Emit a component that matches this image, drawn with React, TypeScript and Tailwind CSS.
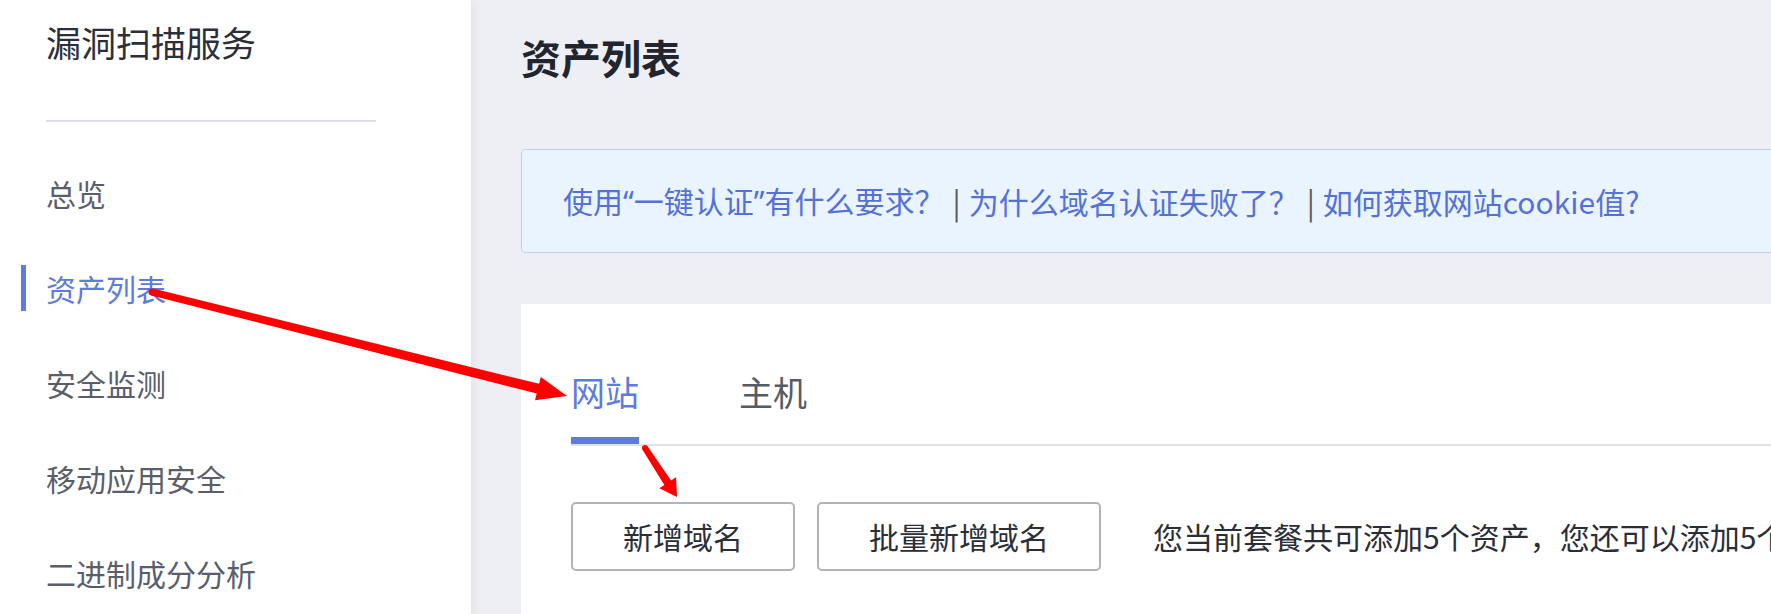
import React from 'react'

const NAV = [
  { label: '总览' },
  { label: '资产列表', active: true },
  { label: '安全监测' },
  { label: '移动应用安全' },
  { label: '二进制成分分析' },
]

type Pt = [number, number]

// annotation arrow: tapered shaft + triangular head
function arrowPoints(s: Pt, t: Pt, w0: number, w1: number, headLen: number, headHalf: number) {
  const dx = t[0] - s[0]
  const dy = t[1] - s[1]
  const len = Math.hypot(dx, dy)
  const ux = dx / len
  const uy = dy / len
  const nx = -uy
  const ny = ux
  const bx = t[0] - ux * headLen
  const by = t[1] - uy * headLen
  const pts: Pt[] = [
    [s[0] + nx * w0 / 2, s[1] + ny * w0 / 2],
    [bx + nx * w1 / 2, by + ny * w1 / 2],
    [bx + nx * headHalf, by + ny * headHalf],
    t,
    [bx - nx * headHalf, by - ny * headHalf],
    [bx - nx * w1 / 2, by - ny * w1 / 2],
    [s[0] - nx * w0 / 2, s[1] - ny * w0 / 2],
  ]
  return pts.map(p => p.join(',')).join(' ')
}

function Arrows() {
  return (
    <svg className="pointer-events-none absolute left-0 top-0 z-20" width={1771} height={614}>
      <circle cx={152} cy={292} r={3.5} fill="#ff0000" />
      <polygon points={arrowPoints([152, 292], [567, 396], 7, 10, 30, 12)} fill="#ff0000" />
      <circle cx={645} cy={448} r={3} fill="#ff0000" />
      <polygon points={arrowPoints([645, 448], [677, 497], 6, 8, 17, 10)} fill="#ff0000" />
    </svg>
  )
}

function Sidebar() {
  return (
    <aside className="relative z-10 w-[471px] shrink-0 bg-white shadow-[3px_0_8px_rgba(40,45,70,0.06)]">
      <div className="pl-[46px] pt-[18px]">
        <h1 className="text-[35px] leading-[48px] text-[#2c2f39]">漏洞扫描服务</h1>
        <div className="mt-[54px] h-[2px] w-[330px] bg-[#dedfe4]" />
      </div>

      <nav className="mt-[48px] flex flex-col gap-[49px]">
        {NAV.map(({ label, active }) => (
          <div key={label} className="ml-[21px] flex h-[46px] items-center">
            <span className={active ? 'h-full w-[5px] bg-[#5d7be0]' : 'h-full w-[5px]'} />
            <span
              className={
                active
                  ? 'ml-[20px] text-[30px] leading-[46px] text-[#5d7be0]'
                  : 'ml-[20px] text-[30px] leading-[46px] text-[#5a5e6a]'
              }
            >
              {label}
            </span>
          </div>
        ))}
      </nav>
    </aside>
  )
}

function Sep() {
  return <span className="px-[8px] text-[#5f5a55]">|</span>
}

// narrow (latin) curly quotes, as in the original rendering
function Q({ children }: { children: string }) {
  return <span className="font-['Noto_Sans',sans-serif]">{children}</span>
}

export default function App() {
  return (
    <div className="relative flex h-[614px] w-[1771px] overflow-hidden bg-[#eeeff4] font-['Noto_Sans_CJK_SC','Noto_Sans',sans-serif]">
      <Sidebar />

      <main className="min-w-0 flex-1 pl-[50px] pt-[29px]">
        <h2 className="text-[40px] font-bold leading-[56px] text-[#22252d]">资产列表</h2>

        <div className="mt-[64px] flex h-[104px] w-[1400px] items-center whitespace-nowrap rounded-[4px] border border-[#bfcff6] bg-[#eaf4ff] pl-[41px] text-[30px] text-[#5571d8]">
          <span>
            使用<Q>“</Q>一键认证<Q>”</Q>有什么要求？
          </span>
          <Sep />
          <span>为什么域名认证失败了？</span>
          <Sep />
          <span>如何获取网站cookie值?</span>
        </div>

        <section className="mt-[51px] h-[400px] w-[1400px] bg-white pl-[50px] pt-[64px]">
          <div className="flex gap-[100px] border-b-2 border-[#e1e2e7]">
            <div className="border-b-[7px] border-[#5d7be0] pb-[21px] text-[34px] leading-[48px] text-[#5d7be0]">
              网站
            </div>
            <div className="pb-[28px] text-[34px] leading-[48px] text-[#555a66]">主机</div>
          </div>

          <div className="mt-[56px] flex items-center whitespace-nowrap text-[30px] text-[#2b2e37]">
            <button className="h-[69px] rounded-[5px] border-2 border-[#b0b3bb] bg-white px-[50px]">
              新增域名
            </button>
            <button className="ml-[22px] h-[69px] rounded-[5px] border-2 border-[#b0b3bb] bg-white px-[50px]">
              批量新增域名
            </button>
            <span className="ml-[52px]">您当前套餐共可添加5个资产，您还可以添加5个资产。</span>
          </div>
        </section>
      </main>

      <Arrows />
    </div>
  )
}
